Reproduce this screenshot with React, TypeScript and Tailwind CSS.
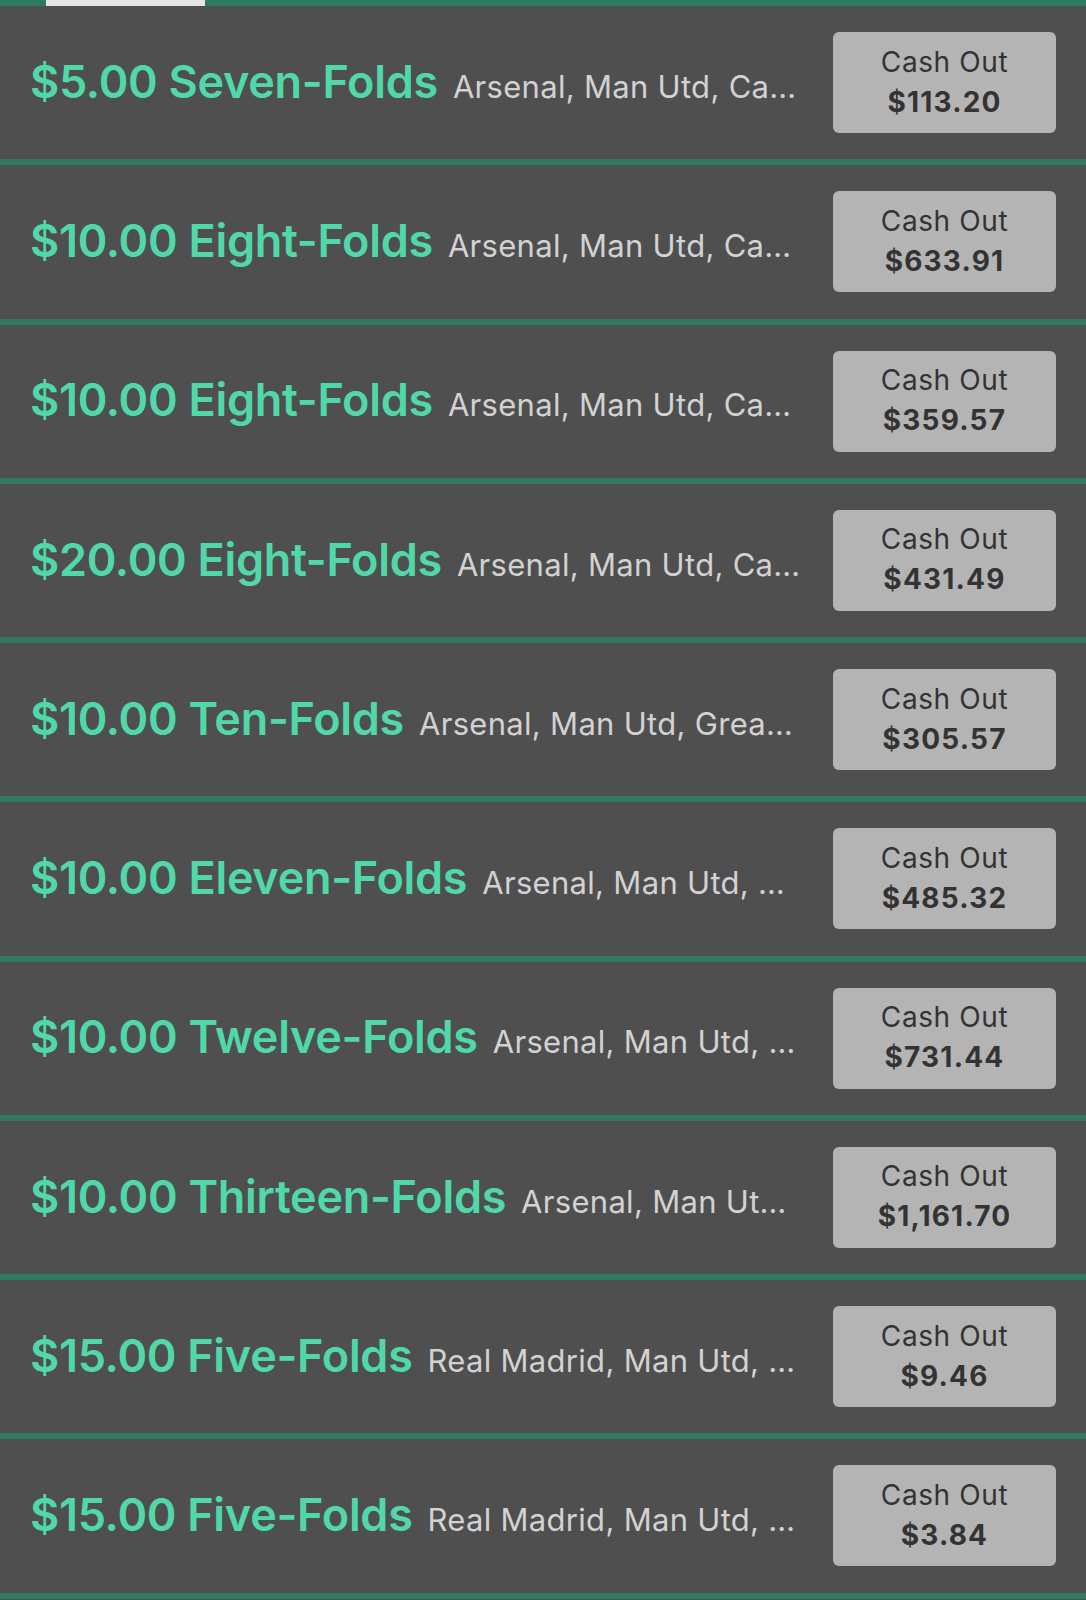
import React from 'react';

interface Bet {
    stake: string;
    name: string;
    teams: string;
    cashOut: string;
}

const bets: Bet[] = [
    { stake: '$5.00', name: 'Seven-Folds', teams: 'Arsenal, Man Utd, Ca…', cashOut: '$113.20' },
    { stake: '$10.00', name: 'Eight-Folds', teams: 'Arsenal, Man Utd, Ca…', cashOut: '$633.91' },
    { stake: '$10.00', name: 'Eight-Folds', teams: 'Arsenal, Man Utd, Ca…', cashOut: '$359.57' },
    { stake: '$20.00', name: 'Eight-Folds', teams: 'Arsenal, Man Utd, Ca…', cashOut: '$431.49' },
    { stake: '$10.00', name: 'Ten-Folds', teams: 'Arsenal, Man Utd, Grea…', cashOut: '$305.57' },
    { stake: '$10.00', name: 'Eleven-Folds', teams: 'Arsenal, Man Utd, …', cashOut: '$485.32' },
    { stake: '$10.00', name: 'Twelve-Folds', teams: 'Arsenal, Man Utd, …', cashOut: '$731.44' },
    { stake: '$10.00', name: 'Thirteen-Folds', teams: 'Arsenal, Man Ut…', cashOut: '$1,161.70' },
    { stake: '$15.00', name: 'Five-Folds', teams: 'Real Madrid, Man Utd, …', cashOut: '$9.46' },
    { stake: '$15.00', name: 'Five-Folds', teams: 'Real Madrid, Man Utd, …', cashOut: '$3.84' },
];

const BetRow: React.FC<{ bet: Bet }> = ({ bet }) => (
    <div className="flex h-[159.25px] items-center border-b-[6px] border-[#2f7b61] px-[30px]">
        <div className="flex min-w-0 flex-1 items-baseline gap-[15px] whitespace-nowrap pb-[2px]">
            <span className="text-[45px] font-semibold tracking-[-0.3px] text-[#50d8a8]">
                {bet.stake} {bet.name}
            </span>
            <span className="text-[31px] tracking-[0.3px] text-[#d2d2d2]">{bet.teams}</span>
        </div>
        <button className="flex h-[101px] w-[223px] shrink-0 flex-col items-center justify-center rounded-[6px] bg-[#b4b4b4] pb-[2px] text-[#333333]">
            <span className="text-[28px] leading-[40px] tracking-[0.6px]">Cash Out</span>
            <span className="text-[28px] font-bold leading-[40px] tracking-[1.2px]">{bet.cashOut}</span>
        </button>
    </div>
);

export default function App() {
    return (
        <div className="min-h-[1600px] bg-[#4f4f4f] font-['Inter',sans-serif]">
            {/* Tab strip */}
            <div className="h-[6px] bg-[#2f7b61] pl-[46px]">
                <div className="h-full w-[159px] bg-[#e6e6e6]"></div>
            </div>
            {bets.map((bet, i) => (
                <BetRow key={i} bet={bet} />
            ))}
        </div>
    );
}
